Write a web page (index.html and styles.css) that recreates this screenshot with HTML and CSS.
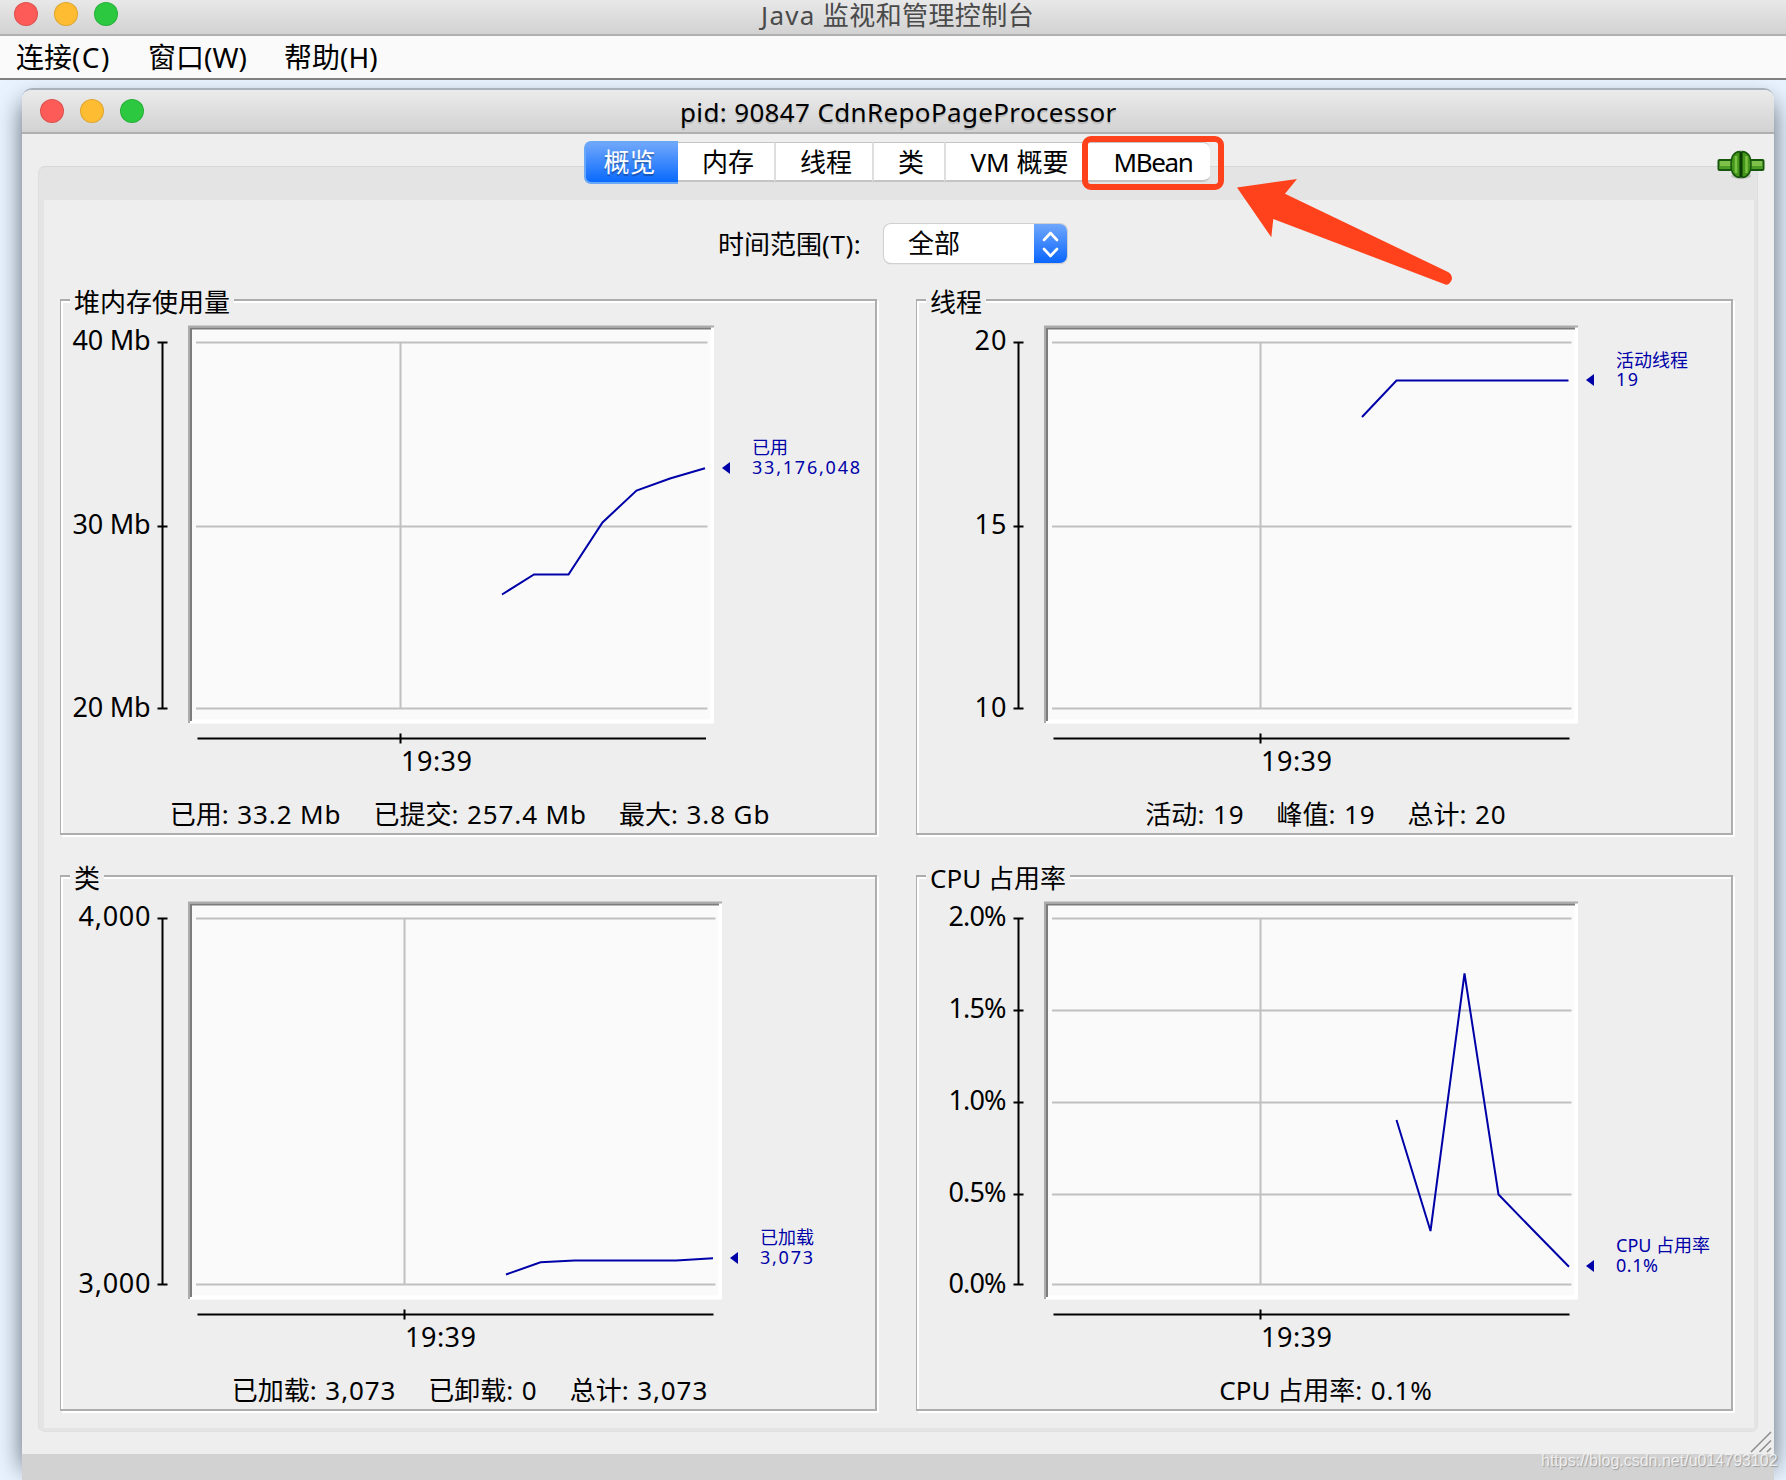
FILE: index.html
```
<!DOCTYPE html>
<html lang="zh-CN">
<head>
  <meta charset="UTF-8">
  <title>Java 监视和管理控制台</title>
  <link rel="stylesheet" href="styles.css">
</head>
<body>
  <header class="titlebar app-title">
    <div class="lights"><i class="red"></i><i class="yellow"></i><i class="green"></i></div>
    <h1><span class="java">Java</span> 监视和管理控制台</h1>
  </header>
  <nav class="menubar">
    <a>连接<span class="key-c">(C)</span></a>
    <a>窗口<span>(W)</span></a>
    <a>帮助<span>(H)</span></a>
  </nav>
  <main class="desktop">
    <section class="window">
      <header class="titlebar window-title">
        <div class="lights"><i class="red"></i><i class="yellow"></i><i class="green"></i></div>
        <h2>pid: 90847 CdnRepoPageProcessor</h2>
      </header>
      <div class="window-body">
        <div class="tabs">
          <button class="tab active">概览</button>
          <button class="tab memory">内存</button>
          <button class="tab threads">线程</button>
          <button class="tab classes">类</button>
          <button class="tab vm"><span>VM</span> 概要</button>
          <button class="tab mbean">MBean</button>
        </div>
        <div class="pane">
          <div class="overview">
            <div class="range">
              <label>时间范围<span>(T):</span></label>
              <div class="select">
                <span class="value">全部</span>
                <span class="arrows">
                  <svg width="33" height="40" viewBox="0 0 33 40"><path d="M10 16l6.500-7 6.500 7M10 25l6.500 7 6.500-7" fill="none" stroke="#fff" stroke-width="2.600" stroke-linecap="round" stroke-linejoin="round"/></svg>
                </span>
              </div>
            </div>
            <div class="grid">
              <div class="group">
                <h3>堆内存使用量</h3>
                <svg class="chart" width="814" height="482" viewBox="1 2 814 482">
                  <rect class="plot" x="128" y="27" width="526" height="397"/>
                  <path class="hi" d="M652 27V422.500H130"/>
                  <path class="lo1" d="M129 424V27.500H654"/>
                  <path class="lo2" d="M131 422V29.500H651"/>
                  <path class="lines" d="M136 43.500H647.500M136 227.500H647.500M136 409.500H647.500M340.500 43V410"/>
                  <path class="axis" d="M102.500 43V410M97.500 43.500H107.500M97.500 227.500H107.500M97.500 409.500H107.500M137.500 439.500H646M340.500 434.500V444.500"/>
                  <text class="tick" x="12.500" y="51" textLength="78">40 Mb</text>
                  <text class="tick" x="12.500" y="235" textLength="78">30 Mb</text>
                  <text class="tick" x="12.500" y="417.500" textLength="78">20 Mb</text>
                  <text class="tick" x="341" y="471.500" textLength="71">19:39</text>
                  <polyline class="series" points="442,295.500 474,275.500 508.500,275.500 542.500,223.500 576.500,191.500 610,179.500 645,169.300"/>
                  <path class="marker" d="M662 169l8-6v12z"/>
                  <text class="key" x="692" y="155">已用</text>
                  <text class="key" x="692" y="175" textLength="108">33,176,048</text>
                </svg>
                <div class="stats"><span>已用<b>: 33.2 Mb</b></span><span>已提交<b>: 257.4 Mb</b></span><span>最大<b>: 3.8 Gb</b></span></div>
              </div>
              <div class="group">
                <h3>线程</h3>
                <svg class="chart" width="814" height="482" viewBox="1 2 814 482">
                  <rect class="plot" x="128" y="27" width="534" height="397"/>
                  <path class="hi" d="M660 27V422.500H130"/>
                  <path class="lo1" d="M129 424V27.500H662"/>
                  <path class="lo2" d="M131 422V29.500H659"/>
                  <path class="lines" d="M136 43.500H655.500M136 227.500H655.500M136 409.500H655.500M344.500 43V410"/>
                  <path class="axis" d="M102.500 43V410M97.500 43.500H107.500M97.500 227.500H107.500M97.500 409.500H107.500M137.500 439.500H653.500M344.500 434.500V444.500"/>
                  <text class="tick" x="58.500" y="51" textLength="32">20</text>
                  <text class="tick" x="58.500" y="235" textLength="32">15</text>
                  <text class="tick" x="58.500" y="417.500" textLength="32">10</text>
                  <text class="tick" x="345" y="471.500" textLength="71">19:39</text>
                  <polyline class="series" points="446,118 480.500,81.500 652.500,81.500"/>
                  <path class="marker" d="M670 81l8-6v12z"/>
                  <text class="key" x="700" y="67.500">活动线程</text>
                  <text class="key" x="700" y="87" textLength="22">19</text>
                </svg>
                <div class="stats"><span>活动<b>: 19</b></span><span>峰值<b>: 19</b></span><span>总计<b>: 20</b></span></div>
              </div>
              <div class="group">
                <h3>类</h3>
                <svg class="chart" width="814" height="482" viewBox="1 2 814 482">
                  <rect class="plot" x="128" y="27" width="534" height="397"/>
                  <path class="hi" d="M660 27V422.500H130"/>
                  <path class="lo1" d="M129 424V27.500H662"/>
                  <path class="lo2" d="M131 422V29.500H659"/>
                  <path class="lines" d="M136 43.500H655.500M136 409.500H655.500M344.500 43V410"/>
                  <path class="axis" d="M102.500 43V410M97.500 43.500H107.500M97.500 409.500H107.500M137.500 439.500H653.500M344.500 434.500V444.500"/>
                  <text class="tick" x="18.500" y="51" textLength="72">4,000</text>
                  <text class="tick" x="18.500" y="417.500" textLength="72">3,000</text>
                  <text class="tick" x="345" y="471.500" textLength="71">19:39</text>
                  <polyline class="series" points="446,399.500 480.500,387.300 514.500,385.500 616,385.500 653,383.300"/>
                  <path class="marker" d="M670 383l8-6v12z"/>
                  <text class="key" x="700" y="369">已加载</text>
                  <text class="key" x="700" y="389" textLength="53">3,073</text>
                </svg>
                <div class="stats"><span>已加载<b>: 3,073</b></span><span>已卸载<b>: 0</b></span><span>总计<b>: 3,073</b></span></div>
              </div>
              <div class="group">
                <h3><span>CPU</span> 占用率</h3>
                <svg class="chart" width="814" height="482" viewBox="1 2 814 482">
                  <rect class="plot" x="128" y="27" width="534" height="397"/>
                  <path class="hi" d="M660 27V422.500H130"/>
                  <path class="lo1" d="M129 424V27.500H662"/>
                  <path class="lo2" d="M131 422V29.500H659"/>
                  <path class="lines" d="M136 43.500H655.500M136 135.500H655.500M136 227.500H655.500M136 319.500H655.500M136 409.500H655.500M344.500 43V410"/>
                  <path class="axis" d="M102.500 43V410M97.500 43.500H107.500M97.500 135.500H107.500M97.500 227.500H107.500M97.500 319.500H107.500M97.500 409.500H107.500M137.500 439.500H653.500M344.500 434.500V444.500"/>
                  <text class="tick" x="32.500" y="51" textLength="58">2.0%</text>
                  <text class="tick" x="32.500" y="143" textLength="58">1.5%</text>
                  <text class="tick" x="32.500" y="235" textLength="58">1.0%</text>
                  <text class="tick" x="32.500" y="327" textLength="58">0.5%</text>
                  <text class="tick" x="32.500" y="417.500" textLength="58">0.0%</text>
                  <text class="tick" x="345" y="471.500" textLength="71">19:39</text>
                  <polyline class="series" points="480.500,245 514.500,356 548.500,98.500 582.500,319.500 616,354 653,391.700"/>
                  <path class="marker" d="M670 391l8-6v12z"/>
                  <text class="key" x="700" y="377">CPU</text>
                  <text class="key" x="740" y="377">占用率</text>
                  <text class="key" x="700" y="396.500" textLength="42">0.1%</text>
                </svg>
                <div class="stats"><span>CPU 占用率<b>: 0.1%</b></span></div>
              </div>
            </div>
          </div>
        </div>
        <!-- connection status plug -->
        <svg class="plug" width="48" height="30" viewBox="0 0 48 30">
          <ellipse cx="24" cy="26" rx="10" ry="3" fill="#000" opacity=".15"/>
          <rect x="1.500" y="10" width="45" height="10" rx="1" fill="#7fc04a" stroke="#17560d" stroke-width="2"/>
          <path d="M3 17.500h42" stroke="#4c9c26" stroke-width="3"/>
          <path d="M23 1.500Q14 2 14 14.500T23 27.500zM25 1.500Q34 2 34 14.500T25 27.500z" fill="#45961b" stroke="#17560d" stroke-width="1.500"/>
          <path d="M19 6v17M29.500 6v17" stroke="#79c244" stroke-width="2.500"/>
          <path d="M24 2v25" stroke="#0c3c06" stroke-width="2"/>
        </svg>
        <svg class="grip" width="22" height="22" viewBox="0 0 22 22"><path d="M1 21L21 1M9.500 21L21 9.500M17 21L21 17" stroke="#8c8c8c" stroke-width="1.500"/></svg>
      </div>
      <div class="strip"></div>
    </section>
  </main>
  <div class="highlight"></div>
  <svg class="arrow" width="220" height="110" viewBox="1235 177 220 110"><path d="M1237 187.500L1297 179L1285 193.700L1448 272Q1452 274 1452 279Q1450 285 1446 284.700L1273.300 219L1271.300 237.300Z" fill="#ff421c"/></svg>
  <div class="watermark">https://blog.csdn.net/u014793102</div>
</body>
</html>
```
FILE: styles.css
```
* {
  box-sizing: border-box;
}
body {
  margin: 0;
  width: 1786px;
  height: 1480px;
  overflow: hidden;
  position: relative;
  background: #e8f3ff;
  font-family: "Noto Sans", "Noto Sans CJK SC", sans-serif;
  font-size: 26px;
  color: #000;
}
h1, h2, h3 {
  margin: 0;
  font-size: 26px;
  font-weight: 400;
}
.titlebar {
  background: linear-gradient(#ebebeb, #d2d2d2);
  border-bottom: 2px solid #b0b0b0;
  display: flex;
  align-items: center;
  position: relative;
}
.titlebar h1, .titlebar h2 {
  flex: 1;
  white-space: nowrap;
}
.lights {
  display: flex;
  gap: 16px;
}
.lights i {
  width: 24px;
  height: 24px;
  border-radius: 50%;
  border: 1px solid rgba(0, 0, 0, 0.12);
}
.red {
  background: #fc5b57;
}
.yellow {
  background: #fdbc32;
}
.green {
  background: #2bc840;
}
.app-title {
  height: 36px;
  padding: 0 0 6px 14px;
  background: linear-gradient(#e8e8e8, #d2d2d2);
}
.app-title h1 {
  line-height: 30px;
  padding: 1px 0 0 643px;
  letter-spacing: 0.4px;
  color: #4a4a4a;
}
.java {
  letter-spacing: 1.3px;
}
.menubar {
  height: 44px;
  background: #fafafa;
  border-bottom: 2px solid #808080;
  display: flex;
  padding-left: 16px;
  font-size: 28px;
  line-height: 43px;
}
.menubar a {
  width: 132px;
}
.menubar a + a {
  width: 136px;
}
.key-c {
  letter-spacing: 1.4px;
}
.desktop {
  height: 1400px;
  padding: 8px 12px 0 22px;
  overflow: hidden;
}
.window {
  border-radius: 10px 10px 0 0;
  border-top: 2px solid #a9b1ba;
  box-shadow: 0 14px 24px rgba(0, 10, 20, 0.6);
  height: 1366px;
}
.window-title {
  height: 44px;
  padding-left: 18px;
  border-radius: 9px 9px 0 0;
}
.window-title h2 {
  padding-left: 536px;
  padding-top: 2px;
  line-height: 38px;
  letter-spacing: 0.35px;
  text-shadow: 0 2px 1px rgba(0, 0, 0, 0.15);
}
.window-body {
  height: 1320px;
  padding: 32px 16px 22px;
  background: #eee;
  position: relative;
}
.pane {
  height: 1266px;
  background: #e4e4e4;
  border: 1px solid #dadada;
  border-color: #d8d8d8 #dedede #e0e0e0;
  border-radius: 7px;
  padding: 33px 3px 3px 5px;
}
.overview {
  height: 100%;
  background: #eee;
  padding: 23px 0 0 16px;
}
/* the tabs straddle the top edge of the pane */
.tabs {
  position: absolute;
  top: 7px;
  left: 562px;
  display: flex;
  align-items: center;
  height: 42px;
}
.tab {
  height: 40px;
  border: solid #c4c4c4;
  border-width: 1px 0 2px;
  background: #fff;
  font: inherit;
  color: #000;
  padding: 0;
  line-height: 36px;
  white-space: nowrap;
}
.tab + .tab + .tab {
  border-left: 2px solid #dedede;
}
.tab.active {
  width: 94px;
  height: 43px;
  color: #fff;
  background: linear-gradient(#6fa7fb, #0a6aff);
  border: 2px solid #69a7f8;
  border-right: 0;
  border-radius: 7px 0 0 7px;
  padding-right: 5px;
  text-shadow: 0 2px 1px rgba(0, 0, 0, 0.3);
}
.memory {
  width: 96px;
  padding-left: 4px;
}
.threads {
  width: 98px;
  padding-left: 4px;
}
.classes {
  width: 72px;
  padding-left: 4px;
}
.vm {
  width: 140px;
  padding-left: 9px;
}
.tab.mbean {
  width: 126px;
  padding-left: 10px;
  letter-spacing: -1.4px;
  border-radius: 0 7px 7px 0;
}
.range {
  height: 40px;
  display: flex;
  align-items: center;
  padding-left: 658px;
}
.range label {
  width: 166px;
  white-space: nowrap;
  line-height: 40px;
  padding-top: 1px;
}
.range label span {
  letter-spacing: 0.6px;
}
.select {
  width: 183px;
  height: 39px;
  display: flex;
  justify-content: space-between;
  background: #fff;
  border-radius: 7px;
  box-shadow: 0 0 0 1px #d0d0d0, 0 1px 1px #b0b0b0;
  overflow: hidden;
}
.value {
  padding-left: 24px;
  line-height: 39px;
}
.arrows {
  width: 33px;
  background: linear-gradient(#6fa7fb, #0a66ff);
}
.grid {
  margin-top: 36px;
  display: grid;
  grid-template-columns: 817px 817px;
  grid-template-rows: 536px 536px;
  gap: 40px 39px;
}
.group {
  position: relative;
  border: solid #adadad;
  border-width: 2px 2px 2px 1px;
  box-shadow: inset 2px 2px 0 #fff, 2px 2px 0 #fff;
}
.group h3 {
  position: absolute;
  top: -18px;
  left: 9px;
  padding: 0 4px;
  line-height: 39px;
  height: 36px;
  background: #eee;
}
.chart {
  display: block;
  position: relative;
}
.plot {
  fill: #fafafa;
}
.hi {
  fill: none;
  stroke: #fff;
  stroke-width: 4;
}
.lo1 {
  fill: none;
  stroke: #acacac;
  stroke-width: 2;
}
.lo2 {
  fill: none;
  stroke: #7c7c7c;
  stroke-width: 2;
}
.lines {
  fill: none;
  stroke: #c0c0c0;
  stroke-width: 2;
}
.axis {
  fill: none;
  stroke: #000;
  stroke-width: 2;
}
.tick {
  font-size: 27px;
}
.series {
  fill: none;
  stroke: #0000a8;
  stroke-width: 2;
}
.marker {
  fill: #0000a8;
}
.key {
  font-size: 18px;
  fill: #0000a8;
}
.stats {
  display: flex;
  justify-content: center;
  gap: 32px;
  line-height: 40px;
  margin-top: 11px;
  padding-left: 4px;
  white-space: nowrap;
}
.stats b {
  font-weight: 400;
  letter-spacing: 0.9px;
}
.plug {
  position: absolute;
  top: 16px;
  left: 1695px;
}
.grip {
  position: absolute;
  right: 2px;
  bottom: 1px;
}
.strip {
  height: 26px;
  background: #d2d2d2;
}
.highlight {
  position: absolute;
  left: 1082px;
  top: 136px;
  width: 142px;
  height: 54px;
  border: 6px solid #ff421c;
  border-radius: 9px;
}
.arrow {
  position: absolute;
  left: 1235px;
  top: 177px;
}
.watermark {
  position: absolute;
  left: 1541px;
  top: 1449px;
  font-family: "Liberation Sans", Arial, sans-serif;
  font-size: 16px;
  line-height: 24px;
  color: rgba(255, 255, 255, 0.75);
  text-shadow: 1px 1px 1px rgba(0, 0, 0, 0.25);
}
```
